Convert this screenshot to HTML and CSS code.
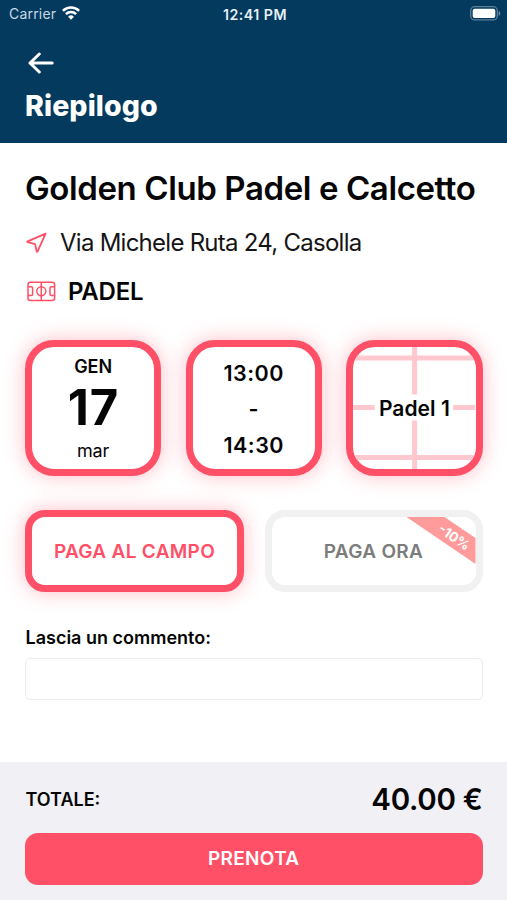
FILE: index.html
```
<!DOCTYPE html>
<html lang="it">
<head>
<meta charset="utf-8">
<meta name="viewport" content="width=device-width, initial-scale=1">
<title>Riepilogo</title>
<link rel="stylesheet" href="styles.css">
</head>
<body>
<header class="header">
  <div class="status">
    <div class="carrier"><span class="carrier-name">Carrier</span>
      <svg class="wifi" viewBox="0 0 18 14" fill="none" stroke="#fff" stroke-width="2.5"><path d="M.9 4.9a11.4 11.4 0 0 1 16.200 0M3.900 8.100a7.200 7.200 0 0 1 10.200 0"/><path d="M9 13.700 6.100 10.700a4.100 4.100 0 0 1 5.800 0z" fill="#fff" stroke="none"/></svg>
    </div>
    <time class="clock">12:41 PM</time>
    <svg class="battery" viewBox="0 0 31 15"><rect x=".7" y=".7" width="26.600" height="13.200" rx="4" fill="none" stroke="#5c7f9a" stroke-width="1.300"/><rect x="2.700" y="2.700" width="22.600" height="9.300" rx="2" fill="#fff"/><path d="M28.700 5v4.800c2.200-.8 2.200-4 0-4.800z" fill="#6d8ba3"/></svg>
  </div>
  <svg class="back" viewBox="0 0 26 22" fill="none" stroke="#fff" stroke-width="3" stroke-linecap="round" stroke-linejoin="round"><path d="M24.200 11H2M11.300 2 2 11l9.300 9"/></svg>
  <h1 class="heading">Riepilogo</h1>
</header>
<main class="content">
  <h2 class="club">Golden Club Padel e Calcetto</h2>
  <div class="address-row">
    <svg class="nav-icon" viewBox="0 0 22 22" fill="none" stroke="#ff5067" stroke-width="1.800" stroke-linejoin="round"><path d="M19.600 1.600 1.600 9.300q-.8.600.2.900l7.300 1.900 1.500 7.200q.5.900 1 0z"/></svg>
    <span class="address">Via Michele Ruta 24, Casolla</span>
  </div>
  <div class="sport-row">
    <svg class="court-icon" viewBox="0 0 29 21" fill="none" stroke="#ff5067" stroke-width="1.500"><rect x="1" y="1.300" width="26.600" height="18.200" rx="2.500"/><path d="M14.300 1.300v18.200M1 5.800h3.300q1.300 0 1.300 1.300v6.200q0 1.300-1.300 1.300H1M27.600 5.800h-3.300q-1.300 0-1.300 1.300v6.200q0 1.300 1.300 1.300h3.300"/><circle cx="14.300" cy="10.300" r="4.500"/></svg>
    <span class="sport">PADEL</span>
  </div>
  <section class="cards">
    <div class="card date"><span class="month">GEN</span><span class="day">17</span><span class="weekday">mar</span></div>
    <div class="card hours"><span>13:00</span><span>-</span><span>14:30</span></div>
    <div class="card court">
      <svg class="court-lines" viewBox="0 0 122 122" stroke="#ffc8cf" stroke-width="5"><path d="M0 11h122M0 110.500h122M61.500 0v47.500M61.500 73.500V122M0 60.500h21.500M100 60.500h22"/></svg>
      <span class="court-name">Padel 1</span>
    </div>
  </section>
  <section class="payments">
    <div class="pay selected"><span>PAGA AL CAMPO</span></div>
    <div class="pay"><span>PAGA ORA</span>
      <div class="ribbon"><span class="discount">-10%</span></div>
    </div>
  </section>
  <label class="comment-label" for="comment">Lascia un commento:</label>
  <input class="comment" id="comment" type="text">
</main>
<footer class="footer">
  <div class="total-row"><span class="total-label">TOTALE:</span><span class="total">40.00 €</span></div>
  <button class="book">PRENOTA</button>
</footer>
</body>
</html>
```
FILE: styles.css
```
* { box-sizing: border-box; }
body {
  margin: 0;
  height: 900px;
  display: flex;
  flex-direction: column;
  overflow: hidden;
  background: #fff;
  color: #050505;
  font-family: Inter, "Liberation Sans", sans-serif;
  font-weight: 600;
  white-space: nowrap;
}
h1, h2 { margin: 0; }
svg { display: block; flex: none; }
.header {
  height: 142.500px;
  flex: none;
  background: #033a5e;
  color: #fff;
}
.status {
  height: 28px;
  padding: 0 6px 0 9px;
  display: grid;
  grid-template-columns: 1fr auto 1fr;
  align-items: center;
  font-size: 14px;
}
.carrier { display: flex; align-items: center; gap: 6px; }
.carrier-name { color: #c8d9e6; font-weight: 400; letter-spacing: .2px; margin-top: -1px; }
.wifi { width: 18px; height: 14px; margin-top: -2px; }
.clock { color: #e6f0f8; letter-spacing: .5px; font-size: 14.200px; }
.battery { width: 31px; height: 15px; margin-top: -2px; justify-self: end; }
.back { width: 26px; height: 22px; margin: 24px 0 0 28px; }
.heading {
  margin: 14px 0 0 25px;
  font-size: 28.500px;
  line-height: 36px;
  font-weight: 800;
  letter-spacing: .1px;
}
.content { padding: 25px 24.500px 0 25px; flex: 1; }
.club { font-size: 33px; line-height: 40px; font-weight: 600; letter-spacing: -.4px; }
.address-row { display: flex; align-items: center; height: 32px; margin-top: 19px; gap: 12px; }
.nav-icon { width: 22px; height: 22px; margin-left: 1px; }
.address { font-size: 24px; font-weight: 400; letter-spacing: -.74px; color: #151515; }
.sport-row { display: flex; align-items: center; height: 32px; margin-top: 17px; gap: 12px; }
.court-icon { width: 29px; height: 21px; margin-left: 2px; }
.sport { font-size: 24px; letter-spacing: -.2px; }
.cards { display: grid; grid-template-columns: repeat(3, 1fr); gap: 24.500px; margin-top: 32px; }
.card {
  position: relative;
  height: 136px;
  border: 7px solid #ff5067;
  border-radius: 29px;
  background: #fff;
  box-shadow: 0 0 20px rgba(255, 80, 103, .38);
  display: flex;
  flex-direction: column;
  align-items: center;
}
.month { font-size: 18px; line-height: 22px; margin-top: 9px; letter-spacing: -.1px; }
.day { font-size: 49px; line-height: 58px; font-weight: 700; margin-top: 1px; letter-spacing: .8px; margin-right: -.8px; }
.weekday { font-size: 18px; line-height: 22px; font-weight: 400; margin-top: 3px; letter-spacing: -.2px; }
.hours { font-size: 21.500px; line-height: 36px; padding-top: 8px; letter-spacing: .5px; }
.court { justify-content: center; overflow: hidden; }
.court-lines { position: absolute; inset: 0; width: 100%; height: 100%; }
.court-name { position: relative; top: 1px; font-size: 21px; line-height: 26px; letter-spacing: .05px; }
.payments { display: grid; grid-template-columns: 219px 218px; justify-content: space-between; margin-top: 34.500px; }
.pay {
  position: relative;
  height: 82px;
  border: 7px solid #f1f1f2;
  border-radius: 20px;
  background: #fff;
  color: #7c7c7c;
  display: flex;
  align-items: center;
  justify-content: center;
  font-size: 19px;
  letter-spacing: .3px;
}
.selected { border-color: #ff5067; color: #ff5067; box-shadow: 0 0 20px rgba(255, 80, 103, .38); }
.ribbon {
  position: absolute;
  top: 0;
  right: 0;
  width: 69px;
  height: 47px;
  background: #ff9b9b;
  clip-path: polygon(0 0, 38px 0, 100% 21px, 100% 100%);
}
.discount {
  position: absolute;
  left: 30px;
  top: 11px;
  font-size: 13.500px;
  line-height: 18px;
  font-weight: 700;
  letter-spacing: 0;
  color: #fff;
  transform: rotate(34deg);
}
.comment-label { display: block; margin: 34px 0 0 .5px; font-size: 18px; line-height: 24px; }
.comment {
  display: block;
  width: 100%;
  height: 42px;
  margin-top: 8px;
  border: 1px solid #ececec;
  border-radius: 5px;
  background: #fff;
}
.footer { height: 138px; flex: none; padding: 17px 24.500px 0 25px; background: #f0f0f5; }
.total-row { display: flex; align-items: center; justify-content: space-between; height: 41px; }
.total-label { margin-left: .5px; font-size: 18px; }
.total { margin-top: -1px; font-size: 29.500px; letter-spacing: -.3px; }
.book {
  display: block;
  width: 100%;
  height: 52.500px;
  margin-top: 12.500px;
  padding: 0;
  border: 0;
  border-radius: 13px;
  background: #ff5067;
  color: #fff;
  font: 600 19px/52px Inter, "Liberation Sans", sans-serif;
  letter-spacing: .3px;
}
```
